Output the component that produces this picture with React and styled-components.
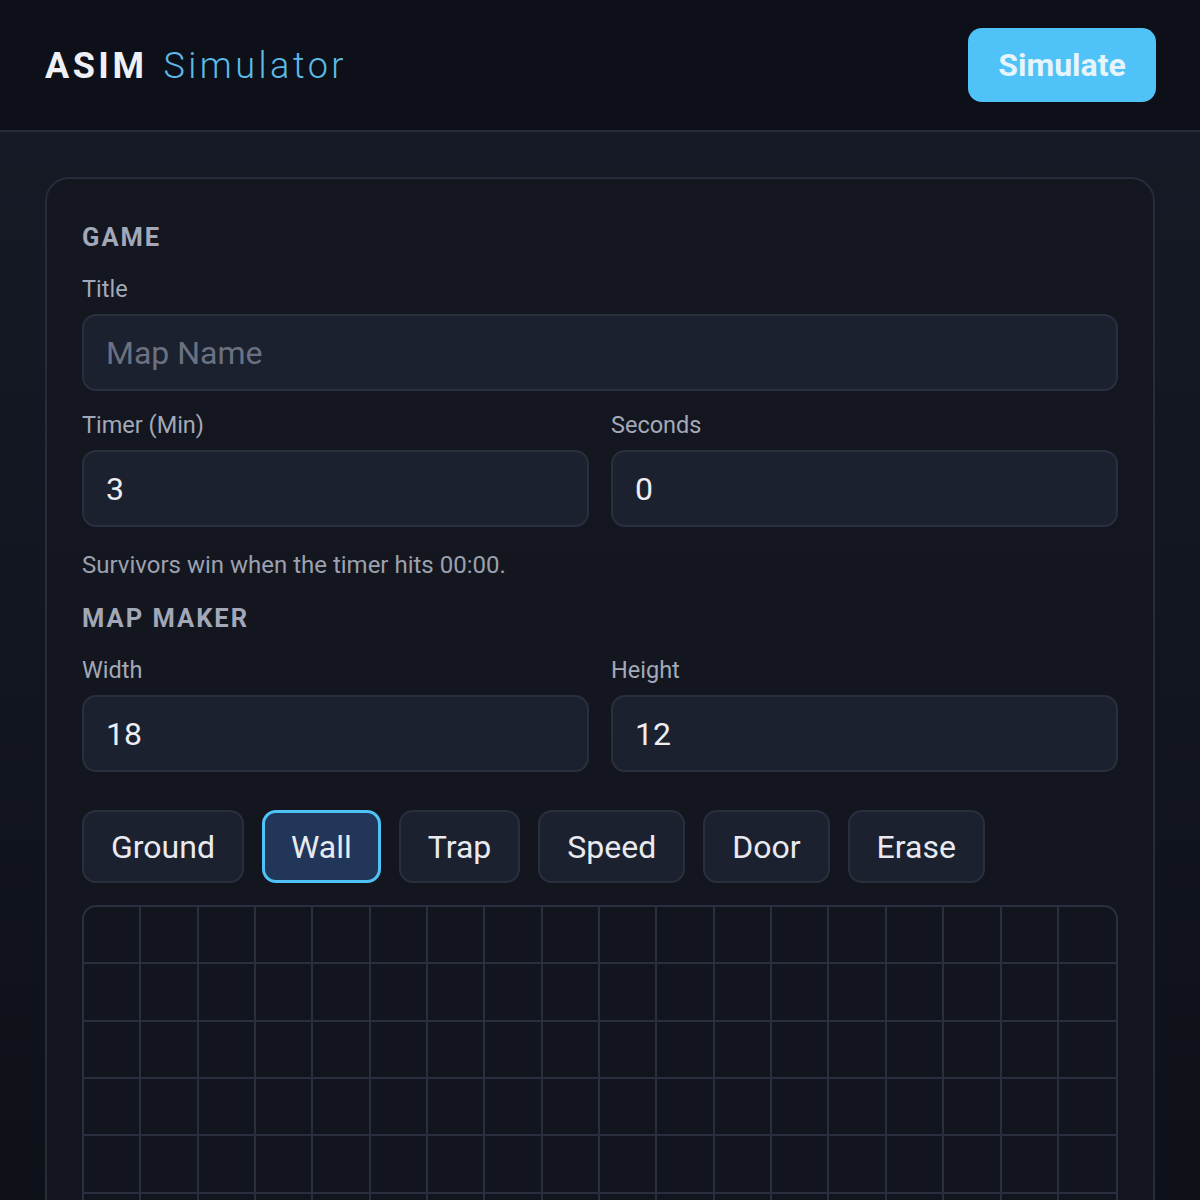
import React from 'react'
import styled, { createGlobalStyle } from 'styled-components'

const TOOLS = ['Ground', 'Wall', 'Trap', 'Speed', 'Door', 'Erase']
const COLS = 18
const ROWS = 12

function App() {
  return (
    <>
      <GlobalStyle />
      <Page>
        <Header>
          <Logo>
            <LogoStrong>ASIM</LogoStrong>
            <LogoLight>Simulator</LogoLight>
          </Logo>
          <SimulateButton>Simulate</SimulateButton>
        </Header>

        <Main>
          <Card>
            <SectionTitle>Game</SectionTitle>
            <Field>
              <Label>Title</Label>
              <Input placeholder="Map Name" />
            </Field>
            <Row $spaced>
              <Field>
                <Label>Timer (Min)</Label>
                <Input defaultValue="3" />
              </Field>
              <Field>
                <Label>Seconds</Label>
                <Input defaultValue="0" />
              </Field>
            </Row>
            <Hint>Survivors win when the timer hits 00:00.</Hint>

            <SectionTitle $spaced>Map Maker</SectionTitle>
            <Row>
              <Field>
                <Label>Width</Label>
                <Input defaultValue="18" />
              </Field>
              <Field>
                <Label>Height</Label>
                <Input defaultValue="12" />
              </Field>
            </Row>

            <Toolbar>
              {TOOLS.map((t) => (
                <ToolButton key={t} $active={t === 'Wall'}>{t}</ToolButton>
              ))}
            </Toolbar>

            <MapGrid>
              {Array.from({ length: COLS * ROWS }).map((_, i) => (
                <Cell key={i} $lastCol={i % COLS === COLS - 1} />
              ))}
            </MapGrid>
          </Card>
        </Main>
      </Page>
    </>
  )
}

export default App

const GlobalStyle = createGlobalStyle`
    * { box-sizing: border-box; }
    html, body {
        margin: 0;
        padding: 0;
        background: #0d1019;
        font-family: Roboto, "Liberation Sans", Arial, sans-serif;
    }
`

const Page = styled.div`
    min-height: 1200px;
    display: flex;
    flex-direction: column;
    background: linear-gradient(180deg, #171b27 0%, #10131b 60%, #0b0d14 100%);
`

const Header = styled.header`
    height: 132px;
    padding: 0 44px 0 45px;
    display: flex;
    align-items: center;
    justify-content: space-between;
    background: #0d1019;
    border-bottom: 2px solid #262b38;
`

const Logo = styled.div`
    display: flex;
    align-items: baseline;
    gap: 16px;
    margin-top: 2px;
    font-size: 36px;
    letter-spacing: 3.5px;
`

const LogoStrong = styled.span`
    font-weight: 700;
    color: #eef0f5;
`

const LogoLight = styled.span`
    font-weight: 300;
    color: #5bbbe6;
`

const SimulateButton = styled.button`
    width: 188px;
    height: 74px;
    border: none;
    border-radius: 14px;
    background: #4fc3f7;
    color: #e6f4fc;
    font-family: inherit;
    font-size: 32px;
    font-weight: 700;
    cursor: pointer;
`

const Main = styled.main`
    flex: 1;
    padding: 45px 45px 0;
`

const Card = styled.section`
    display: flex;
    flex-direction: column;
    padding: 43px 35px 0;
    border: 2px solid #272c3a;
    border-bottom: none;
    border-radius: 24px 24px 0 0;
    background: linear-gradient(180deg, #141720 0%, #12151d 100%);
    min-height: 1030px;
`

const SectionTitle = styled.h2`
    margin: ${(p) => (p.$spaced ? '24px' : '0')} 0 23px;
    font-size: 25.5px;
    line-height: 30px;
    font-weight: 700;
    letter-spacing: 2px;
    text-transform: uppercase;
    color: #a2a8b7;
`

const Field = styled.div`
    display: flex;
    flex-direction: column;
    gap: 11px;
    flex: 1;
`

const Label = styled.label`
    font-size: 23.5px;
    line-height: 28px;
    color: #a3a9b8;
`

const Input = styled.input`
    height: 77px;
    padding: 0 22px;
    border: 2px solid #2a2f3e;
    border-radius: 14px;
    background: #1c2130;
    color: #eceef3;
    font-family: inherit;
    font-size: 32px;
    outline: none;

    &::placeholder {
        color: #6b7180;
    }
`

const Row = styled.div`
    display: flex;
    gap: 22px;
    margin-top: ${(p) => (p.$spaced ? '20px' : '0')};
`

const Hint = styled.p`
    margin: 24px 0 0;
    font-size: 24px;
    line-height: 28px;
    color: #9ba1b0;
`

const Toolbar = styled.div`
    display: flex;
    gap: 18px;
    margin-top: 38px;
`

const ToolButton = styled.button`
    height: 73px;
    padding: 0 ${(p) => (p.$active ? '26px' : '27px')};
    border: ${(p) => (p.$active ? '3px solid #4fc3f7' : '2px solid #2a2f3e')};
    border-radius: 14px;
    background: ${(p) => (p.$active ? '#22365a' : '#1c2130')};
    color: #e8eaf0;
    font-family: inherit;
    font-size: 32px;
    cursor: pointer;
`

const MapGrid = styled.div`
    display: grid;
    grid-template-columns: repeat(${COLS}, 1fr);
    margin-top: 22px;
    border: 2px solid #2a2f40;
    border-radius: 14px;
    overflow: hidden;
    background: #12151d;
`

const Cell = styled.div`
    aspect-ratio: 1;
    border-right: ${(p) => (p.$lastCol ? 'none' : '2px solid #2a2f40')};
    border-bottom: 2px solid #2a2f40;
`
